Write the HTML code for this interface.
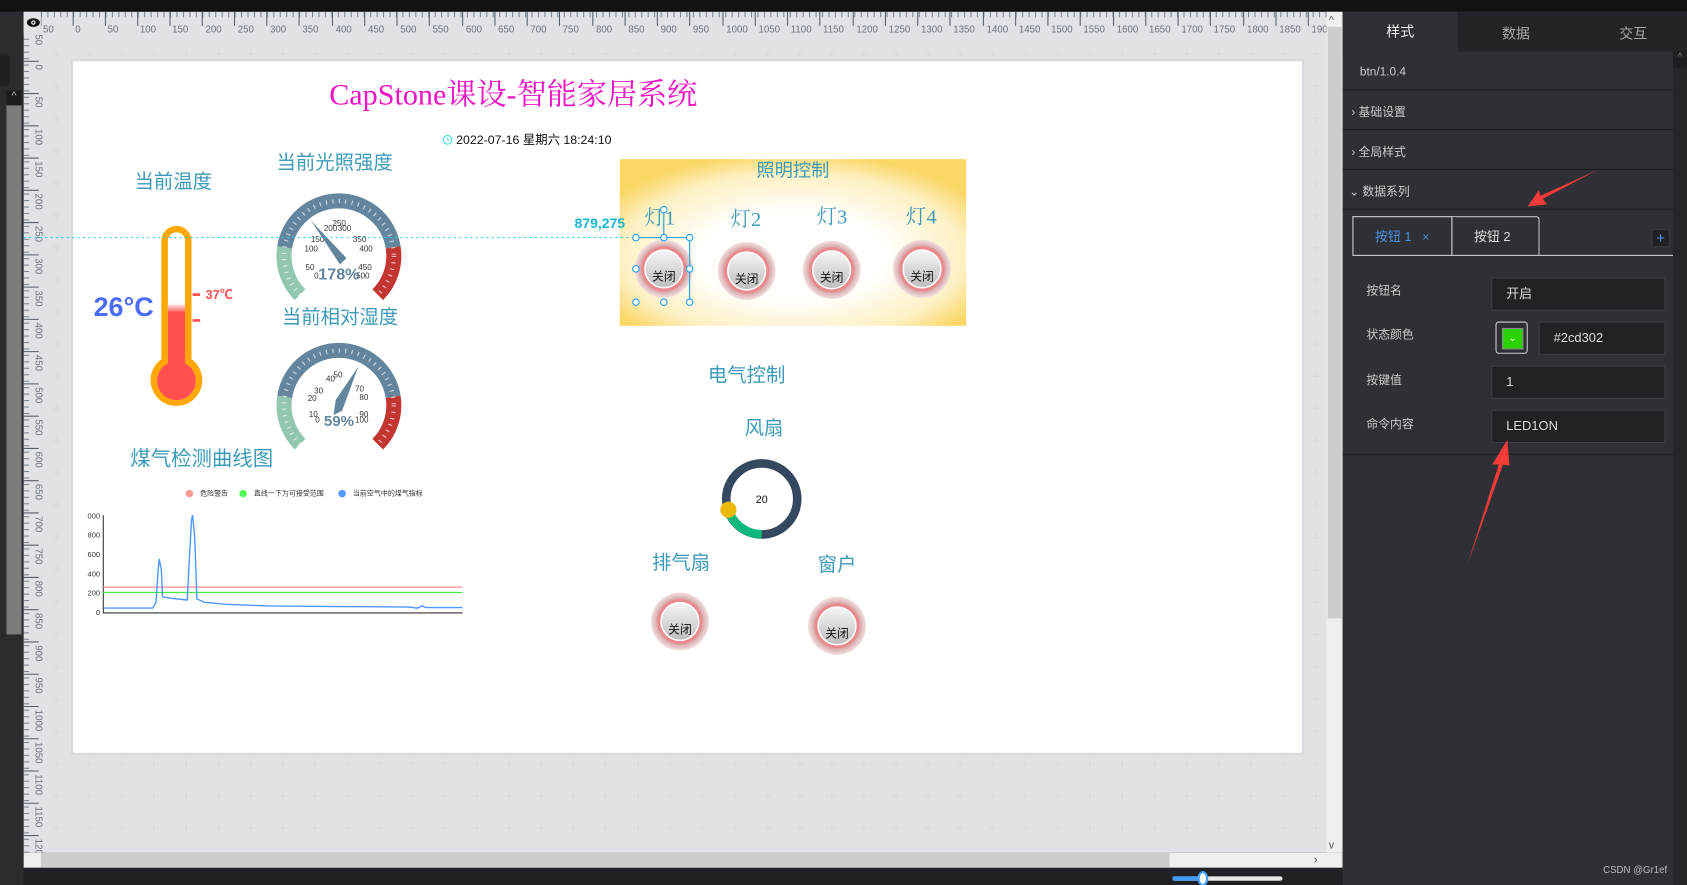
<!DOCTYPE html>
<html><head><meta charset="utf-8"><style>
html,body{margin:0;padding:0;width:1687px;height:885px;overflow:hidden;background:#202124;}
#root{position:absolute;left:0;top:0;width:1568px;height:823px;transform:scale(1.07589,1.07533);transform-origin:0 0;font-family:"Liberation Sans","Noto Sans CJK SC",sans-serif;}
.abs{position:absolute;}
.panel{left:1248px;top:11px;width:320px;height:812px;background:#2e3035;color:#ccc;font-size:12px;}
.row{position:absolute;left:0;width:307px;border-bottom:1px solid #1e1f22;}
.inp{position:absolute;background:#212225;border:1px solid #3d3f44;color:#ddd;font-size:12px;box-sizing:border-box;padding-left:13px;}
.lbl{position:absolute;left:22px;font-size:11px;color:#ccc;}
</style></head><body><div id="root">
<div class="abs" style="left:0;top:0;width:1568px;height:11px;background:#121212"></div>
<div class="abs" style="left:0;top:11px;width:22px;height:812px;background:#2b2c30"></div>
<div class="abs" style="left:0;top:50px;width:9px;height:30px;background:#1f2023;border-radius:0 4px 4px 0"></div>
<div class="abs" style="left:6px;top:84px;width:14px;height:14px;background:#1c1d20;color:#aaa;font-size:10px;text-align:center">^</div>
<div class="abs" style="left:6px;top:98px;width:14px;height:492px;background:#7c7c7c"></div>
<svg class="abs" style="left:0;top:0" width="1248" height="823" viewBox="0 0 1248 823">
<defs>
<pattern id="grid" x="38" y="35" width="30" height="30" patternUnits="userSpaceOnUse">
<path d="M15 11v8M11 15h8" stroke="#d9dadd" stroke-width="1"/></pattern>
<pattern id="tk" x="68" y="0" width="6" height="30" patternUnits="userSpaceOnUse"><path d="M0.5 11v5" stroke="#7a8592"/></pattern>
<pattern id="tkv" x="0" y="60" width="30" height="6" patternUnits="userSpaceOnUse"><path d="M22 0.5h5" stroke="#7a8592"/></pattern>
<radialGradient id="yel" cx="50%" cy="58%" r="62%"><stop offset="0.45" stop-color="#fffefa"/><stop offset="0.8" stop-color="#fdf0c2"/><stop offset="1" stop-color="#fbd766"/></radialGradient>
<radialGradient id="bo" cx="50%" cy="50%" r="50%"><stop offset="0.6" stop-color="#e98f92"/><stop offset="0.78" stop-color="#d9a6a8"/><stop offset="1" stop-color="#f1e2e2"/></radialGradient>
<linearGradient id="bi" x1="0" y1="0" x2="0" y2="1"><stop offset="0" stop-color="#f6f6f6"/><stop offset="1" stop-color="#bdbdbd"/></linearGradient>
<g id="btn"><circle r="27" fill="url(#bo)"/><circle r="21" fill="#e98a8e"/><circle r="17.5" fill="url(#bi)" stroke="#fafafa" stroke-width="1.5"/><text y="11" text-anchor="middle" font-size="11" fill="#111">关闭</text></g>
</defs>
<rect x="22" y="11" width="1226" height="782" fill="#e1e2e5"/>
<rect x="38" y="35" width="1195" height="758" fill="url(#grid)"/>
<rect x="22" y="11" width="1211" height="20" fill="url(#tk)"/>
<rect x="22" y="35" width="20" height="758" fill="url(#tkv)"/>
<g stroke="#56606c"><path d="M38 11v13M68 11v13M98 11v13M128 11v13M158 11v13M188 11v13M218 11v13M248 11v13M278 11v13M309 11v13M339 11v13M369 11v13M399 11v13M430 11v13M460 11v13M490 11v13M520 11v13M551 11v13M581 11v13M611 11v13M641 11v13M672 11v13M702 11v13M732 11v13M762 11v13M793 11v13M823 11v13M853 11v13M883 11v13M914 11v13M944 11v13M974 11v13M1004 11v13M1035 11v13M1065 11v13M1095 11v13M1125 11v13M1156 11v13M1186 11v13M1216 11v13"/>
<path d="M22 30h14M22 57h14M22 87h14M22 117h14M22 147h14M22 177h14M22 207h14M22 237h14M22 267h14M22 297h14M22 327h14M22 357h14M22 387h14M22 417h14M22 447h14M22 477h14M22 507h14M22 537h14M22 567h14M22 597h14M22 627h14M22 657h14M22 687h14M22 717h14M22 747h14M22 777h14"/></g>
<g font-size="9" fill="#6b7480" font-family="Liberation Sans,sans-serif">
<text x="40" y="30">50</text><text x="70" y="30">0</text><text x="100" y="30">50</text><text x="130" y="30">100</text><text x="160" y="30">150</text><text x="191" y="30">200</text><text x="221" y="30">250</text><text x="251" y="30">300</text><text x="281" y="30">350</text><text x="312" y="30">400</text><text x="342" y="30">450</text><text x="372" y="30">500</text><text x="402" y="30">550</text><text x="433" y="30">600</text><text x="463" y="30">650</text><text x="493" y="30">700</text><text x="523" y="30">750</text><text x="554" y="30">800</text><text x="584" y="30">850</text><text x="614" y="30">900</text><text x="644" y="30">950</text><text x="675" y="30">1000</text><text x="705" y="30">1050</text><text x="735" y="30">1100</text><text x="765" y="30">1150</text><text x="796" y="30">1200</text><text x="826" y="30">1250</text><text x="856" y="30">1300</text><text x="886" y="30">1350</text><text x="917" y="30">1400</text><text x="947" y="30">1450</text><text x="977" y="30">1500</text><text x="1007" y="30">1550</text><text x="1038" y="30">1600</text><text x="1068" y="30">1650</text><text x="1098" y="30">1700</text><text x="1128" y="30">1750</text><text x="1159" y="30">1800</text><text x="1189" y="30">1850</text><text x="1219" y="30">1900</text>
<text transform="translate(33,32) rotate(90)">50</text><text transform="translate(33,60) rotate(90)">0</text><text transform="translate(33,90) rotate(90)">50</text><text transform="translate(33,120) rotate(90)">100</text><text transform="translate(33,150) rotate(90)">150</text><text transform="translate(33,180) rotate(90)">200</text><text transform="translate(33,210) rotate(90)">250</text><text transform="translate(33,240) rotate(90)">300</text><text transform="translate(33,270) rotate(90)">350</text><text transform="translate(33,300) rotate(90)">400</text><text transform="translate(33,330) rotate(90)">450</text><text transform="translate(33,360) rotate(90)">500</text><text transform="translate(33,390) rotate(90)">550</text><text transform="translate(33,420) rotate(90)">600</text><text transform="translate(33,450) rotate(90)">650</text><text transform="translate(33,480) rotate(90)">700</text><text transform="translate(33,510) rotate(90)">750</text><text transform="translate(33,540) rotate(90)">800</text><text transform="translate(33,570) rotate(90)">850</text><text transform="translate(33,600) rotate(90)">900</text><text transform="translate(33,630) rotate(90)">950</text><text transform="translate(33,660) rotate(90)">1000</text><text transform="translate(33,690) rotate(90)">1050</text><text transform="translate(33,720) rotate(90)">1100</text><text transform="translate(33,750) rotate(90)">1150</text><text transform="translate(33,780) rotate(90)">1200</text>
</g>
<rect x="22" y="11" width="16" height="20" fill="#e1e2e5"/>
<ellipse cx="31" cy="21" rx="6" ry="4" fill="#111"/><circle cx="31" cy="21" r="2" fill="#fff"/><circle cx="31" cy="21" r="1" fill="#111"/>
<rect x="66" y="55" width="1146" height="647" fill="#d5d6d9" opacity="0.6"/>
<rect x="68" y="57" width="1142" height="643" fill="#fff"/>
<rect x="1233" y="11" width="15" height="782" fill="#efefef"/>
<rect x="1234" y="25" width="13" height="550" fill="#cdcdcd"/>
<text x="1235" y="22" font-size="10" fill="#555">^</text><text x="1235" y="789" font-size="10" fill="#555">v</text>
<rect x="22" y="793" width="1226" height="14" fill="#efefef"/>
<rect x="38" y="793" width="1049" height="14" fill="#cdcdcd"/>
<text x="1221" y="803" font-size="11" fill="#555">›</text>
<rect x="22" y="807" width="1226" height="16" fill="#202124"/>
<rect x="1090" y="815" width="102" height="4" rx="2" fill="#e8e8e8"/><rect x="1090" y="815" width="28" height="4" fill="#409eff"/><ellipse cx="1118" cy="817" rx="4" ry="6" fill="#fff" stroke="#409eff" stroke-width="2"/>

<text x="306" y="97" font-family="Liberation Serif,Noto Serif CJK SC,serif" font-size="28" fill="#ee12c5">CapStone课设-智能家居系统</text>
<circle cx="416" cy="130" r="4" fill="none" stroke="#5ee0f0" stroke-width="1.2"/><path d="M416 128v2h2" stroke="#5ee0f0" fill="none" stroke-width="1"/>
<text x="424" y="134" font-size="11.5" fill="#111">2022-07-16 星期六 18:24:10</text>
<g fill="#3d9ab8" font-size="18"><text x="125" y="175">当前温度</text><text x="257" y="157">当前光照强度</text><text x="262" y="301">当前相对湿度</text><text x="121" y="433" font-size="19">煤气检测曲线图</text>
<text x="658" y="355">电气控制</text><text x="692" y="404">风扇</text><text x="606" y="529">排气扇</text><text x="760" y="531">窗户</text></g>

<path d="M150 224a14 14 0 0 1 28 0v110a24 24 0 1 1 -28 0z" fill="#fea700"/>
<path d="M156 224a8 8 0 0 1 16 0v114a18 18 0 1 1 -16 0z" fill="#fff"/>
<defs><linearGradient id="tf" x1="0" y1="0" x2="0" y2="1"><stop offset="0" stop-color="#fff"/><stop offset="1" stop-color="#ff5050"/></linearGradient></defs>
<rect x="156" y="282" width="16" height="9" fill="url(#tf)"/>
<path d="M156 290h16v48a18 18 0 1 1 -16 0z" fill="#ff4f4f"/>
<path d="M179 274h7M179 298h7" stroke="#ff4f4f" stroke-width="2.5"/>
<text x="191" y="278" font-size="12" font-weight="bold" fill="#ff4f4f">37℃</text>
<text x="87" y="294" font-size="25" font-weight="bold" fill="#4a6cf7">26°C</text>

<g fill="none" stroke-width="14">
<path d="M278.9 274.1A51 51 0 0 1 264.6 230" stroke="#91c7ae"/>
<path d="M264.6 230A51 51 0 0 1 365.4 230" stroke="#63869e"/>
<path d="M365.4 230A51 51 0 0 1 351.1 274.1" stroke="#c23531"/>
</g>
<circle cx="315" cy="238" r="51" fill="none" stroke="#fff" stroke-width="4" stroke-dasharray="1 5" opacity="0.7"/>
<g font-size="7.5" fill="#333"><text x="301" y="215">200</text><text x="309" y="210">250</text><text x="314" y="215">300</text><text x="289" y="225">150</text><text x="328" y="225">350</text><text x="283" y="234">100</text><text x="334" y="234">400</text><text x="284" y="251">50</text><text x="333" y="251">450</text><text x="292" y="259">0</text><text x="331" y="259">500</text></g>
<path d="M289 205L322 240L316 246Z" fill="#63869e"/>
<text x="315" y="260" text-anchor="middle" font-size="15" font-weight="bold" fill="#63869e">178%</text>
<g fill="none" stroke-width="14">
<path d="M278.9 413.1A51 51 0 0 1 264.6 369" stroke="#91c7ae"/>
<path d="M264.6 369A51 51 0 0 1 365.4 369" stroke="#63869e"/>
<path d="M365.4 369A51 51 0 0 1 351.1 413.1" stroke="#c23531"/>
</g>
<circle cx="315" cy="377" r="51" fill="none" stroke="#fff" stroke-width="4" stroke-dasharray="1 5" opacity="0.7"/>
<g font-size="7.5" fill="#333"><text x="303" y="355">40</text><text x="310" y="351">50</text><text x="292" y="366">30</text><text x="286" y="373">20</text><text x="330" y="364">70</text><text x="334" y="372">80</text><text x="287" y="388">10</text><text x="334" y="388">90</text><text x="293" y="393">0</text><text x="330" y="393">100</text></g>
<path d="M333 341L318 382L310 386L312 372Z" fill="#63869e"/>
<text x="315" y="396" text-anchor="middle" font-size="14" font-weight="bold" fill="#63869e">59%</text>

<g font-size="6.5" fill="#333"><circle cx="176" cy="459" r="3.5" fill="#f99"/><text x="186" y="461">危险警告</text><circle cx="226" cy="459" r="3.5" fill="#5f5"/><text x="236" y="461">直线一下为可接受范围</text><circle cx="318" cy="459" r="3.5" fill="#59f"/><text x="328" y="461">当前空气中的煤气指标</text></g>
<g font-size="7" fill="#333" text-anchor="end"><text x="93" y="482">000</text><text x="93" y="500">800</text><text x="93" y="518">600</text><text x="93" y="536">400</text><text x="93" y="554">200</text><text x="93" y="572">0</text></g>
<path d="M96 479V570H430" stroke="#333" fill="none"/>
<line x1="96" y1="546" x2="430" y2="546" stroke="#f88" stroke-width="1.2"/>
<line x1="96" y1="551" x2="430" y2="551" stroke="#4e4" stroke-width="1.2"/>
<path d="M97 565.5L142 565.5L145 560L147 530L148 520L150 530L151 555L160 556.5L170 557.5L174 558L176 520L178 484L179 479L181 500L183 557L190 560L210 562L250 563.5L300 564L380 564.5L388 565.5L392 563.5L396 565L430 565" stroke="#4f97ff" stroke-width="1.3" fill="none"/>

<rect x="576" y="148" width="322" height="155" fill="url(#yel)"/>
<text x="737" y="164" text-anchor="middle" font-size="17" fill="#3d9ab8">照明控制</text>
<g font-family="Liberation Serif,Noto Serif CJK SC,serif" font-size="19" fill="#3d9ab8"><text x="599" y="209">灯1</text><text x="679" y="210">灯2</text><text x="759" y="208">灯3</text><text x="842" y="208">灯4</text></g>
<use href="#btn" x="617" y="250"/><use href="#btn" x="694" y="252"/><use href="#btn" x="773" y="251"/><use href="#btn" x="857" y="250"/>
<use href="#btn" x="632" y="578"/><use href="#btn" x="778" y="582"/>
<line x1="22" y1="221" x2="591" y2="221" stroke="#22d0ea" stroke-dasharray="2 3"/>
<text x="534" y="212" font-size="13" font-weight="bold" fill="#18b6d2">879,275</text>
<g stroke="#1a9cf0" fill="none"><path d="M591 221H641V281M617 221V193"/>
<g fill="#fff"><circle cx="591" cy="221" r="3"/><circle cx="617" cy="221" r="3"/><circle cx="641" cy="221" r="3"/><circle cx="591" cy="250" r="3"/><circle cx="641" cy="250" r="3"/><circle cx="591" cy="281" r="3"/><circle cx="617" cy="281" r="3"/><circle cx="641" cy="281" r="3"/><circle cx="617" cy="195" r="3"/></g></g>

<circle cx="708" cy="464" r="33" fill="none" stroke="#344860" stroke-width="8"/>
<path d="M708 497A33 33 0 0 1 677 474" fill="none" stroke="#0db87a" stroke-width="8"/>
<circle cx="677" cy="474" r="7.5" fill="#edb908"/>
<text x="708" y="468" text-anchor="middle" font-size="10" fill="#111">20</text>
</svg>

<div class="abs panel">
<div class="abs" style="left:0;top:0;width:107px;height:37px;background:#2e3035;color:#eee;font-size:13px;text-align:center;line-height:37px">样式</div>
<div class="abs" style="left:107px;top:0;width:213px;height:37px;background:#232428;color:#aaa;font-size:13px">
<span class="abs" style="left:41px;top:10px">数据</span><span class="abs" style="left:150px;top:10px">交互</span></div>
<div class="abs" style="left:307px;top:37px;width:13px;height:775px;background:#25262a"></div>
<div class="abs" style="left:307px;top:37px;width:13px;height:15px;background:#1e1f22;color:#888;font-size:9px;text-align:center">^</div>
<div class="row" style="top:37px;height:35px"><span class="abs" style="left:16px;top:13px;font-size:11px">btn/1.0.4</span></div>
<div class="row" style="top:73px;height:36px"><span class="abs" style="left:8px;top:12px;font-size:11px">›&nbsp;基础设置</span></div>
<div class="row" style="top:110px;height:36px"><span class="abs" style="left:8px;top:12px;font-size:11px">›&nbsp;全局样式</span></div>
<div class="row" style="top:147px;height:36px"><span class="abs" style="left:6px;top:12px;font-size:11px">⌄&nbsp;数据系列</span></div>
<div class="abs" style="left:9px;top:190px;width:93px;height:36px;border:1px solid #cfd0d3;border-bottom:none;box-sizing:border-box;color:#4a90e2;font-size:12px;line-height:36px;padding-left:20px">按钮 1 &nbsp;&nbsp;<span style="font-size:11px">×</span></div>
<div class="abs" style="left:101px;top:190px;width:82px;height:36px;border:1px solid #cfd0d3;border-bottom:none;border-radius:0 3px 0 0;box-sizing:border-box;color:#ddd;font-size:12px;line-height:36px;padding-left:20px">按钮 2</div>
<div class="abs" style="left:9px;top:226px;width:298px;height:1px;background:#cfd0d3"></div>
<div class="abs" style="left:287px;top:202px;width:17px;height:17px;background:#1f2023;border:1px solid #3a3c40;box-sizing:border-box;color:#4a90e2;font-size:14px;line-height:14px;text-align:center">+</div>
<span class="lbl" style="top:251px">按钮名</span>
<div class="inp" style="left:138px;top:247px;width:162px;height:31px;line-height:29px">开启</div>
<span class="lbl" style="top:292px">状态颜色</span>
<div class="abs" style="left:142px;top:288px;width:30px;height:30px;border:1px solid #ccc;border-radius:3px;box-sizing:border-box"><div class="abs" style="left:5px;top:5px;width:18px;height:18px;background:#2cd302;border:1px solid #888;color:#fff;font-size:9px;text-align:center;line-height:16px">⌄</div></div>
<div class="inp" style="left:182px;top:288px;width:118px;height:31px;line-height:29px">#2cd302</div>
<span class="lbl" style="top:334px">按键值</span>
<div class="inp" style="left:138px;top:329px;width:162px;height:31px;line-height:29px">1</div>
<span class="lbl" style="top:375px">命令内容</span>
<div class="inp" style="left:138px;top:370px;width:162px;height:31px;line-height:29px">LED1ON</div>
<div class="abs" style="left:0;top:411px;width:307px;height:1px;background:#1e1f22"></div>
<span class="abs" style="left:242px;top:793px;font-size:9px;color:#bbb">CSDN @Gr1ef</span>
</div>
<svg class="abs" style="left:1248px;top:0" width="320" height="823">
<path d="M237 158L186 185L190 190L172 192L182 177L184 182Z" fill="#f53a3a"/>
<path d="M116 525L145 432L139 432L153 409L155 433L149 432Z" fill="#f53a3a"/>
</svg>
</div></body></html>
